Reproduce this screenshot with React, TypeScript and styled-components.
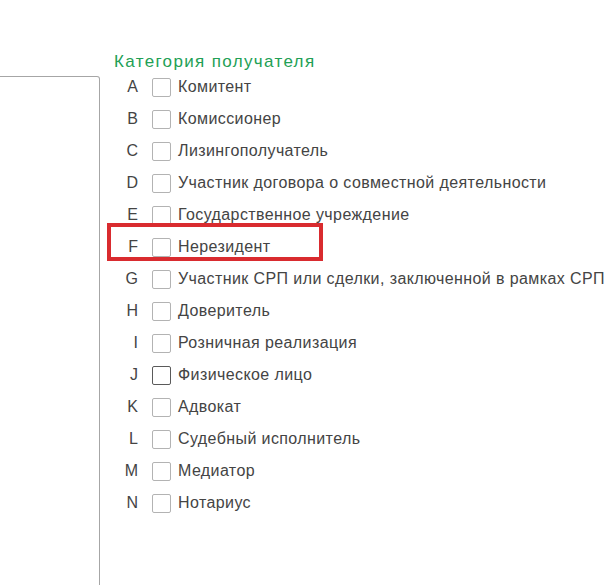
import styled, { createGlobalStyle } from 'styled-components';

const GlobalStyle = createGlobalStyle`
  html, body {
    margin: 0;
    padding: 0;
    background: #fff;
  }
  body {
    font-family: 'Liberation Sans', Arial, sans-serif;
  }
`;

const items: { code: string; label: string; highlighted?: boolean; active?: boolean }[] = [
  { code: 'A', label: 'Комитент' },
  { code: 'B', label: 'Комиссионер' },
  { code: 'C', label: 'Лизингополучатель' },
  { code: 'D', label: 'Участник договора о совместной деятельности' },
  { code: 'E', label: 'Государственное учреждение' },
  { code: 'F', label: 'Нерезидент', highlighted: true },
  { code: 'G', label: 'Участник СРП или сделки, заключенной в рамках СРП' },
  { code: 'H', label: 'Доверитель' },
  { code: 'I', label: 'Розничная реализация' },
  { code: 'J', label: 'Физическое лицо', active: true },
  { code: 'K', label: 'Адвокат' },
  { code: 'L', label: 'Судебный исполнитель' },
  { code: 'M', label: 'Медиатор' },
  { code: 'N', label: 'Нотариус' },
];

export default function App() {
  return (
    <>
      <GlobalStyle />
      <Page>
        <SidePanel />
        <Content>
          <Title>Категория получателя</Title>
          <List>
            {items.map((item) => (
              <Row key={item.code}>
                <Code>{item.code}</Code>
                <Checkbox $active={item.active} />
                <Label>{item.label}</Label>
                {item.highlighted && <Highlight />}
              </Row>
            ))}
          </List>
        </Content>
      </Page>
    </>
  );
}

const Page = styled.div`
  display: flex;
  width: 616px;
  height: 585px;
  overflow: hidden;
`;

const SidePanel = styled.div`
  flex: none;
  width: 99px;
  height: 560px;
  margin-top: 76px;
  border: 1px solid #a6a6a6;
  border-left: none;
  border-top-right-radius: 3px;
`;

const Content = styled.div`
  padding: 51px 0 0 14px;
`;

const Title = styled.div`
  height: 22px;
  margin-bottom: -2px;
  line-height: 22px;
  font-size: 17px;
  letter-spacing: 1.35px;
  color: #22a055;
`;

const List = styled.div`
  display: flex;
  flex-direction: column;
`;

const Row = styled.div`
  position: relative;
  display: flex;
  align-items: center;
  height: 32px;
  font-size: 16px;
  color: #444;
`;

const Code = styled.span`
  width: 24px;
  text-align: right;
`;

const Checkbox = styled.span<{ $active?: boolean }>`
  box-sizing: border-box;
  width: 19px;
  height: 19px;
  margin: 0 7px 0 14px;
  border: 1px solid ${({ $active }) => ($active ? '#5a5a5a' : '#b3b3b3')};
  border-radius: 2px;
  background: #fff;
`;

const Label = styled.span`
  white-space: nowrap;
  letter-spacing: 0.4px;
`;

const Highlight = styled.span`
  position: absolute;
  left: -7px;
  top: -8px;
  width: 216px;
  height: 38px;
  box-sizing: border-box;
  border: 4px solid #d92b2f;
  pointer-events: none;
`;
